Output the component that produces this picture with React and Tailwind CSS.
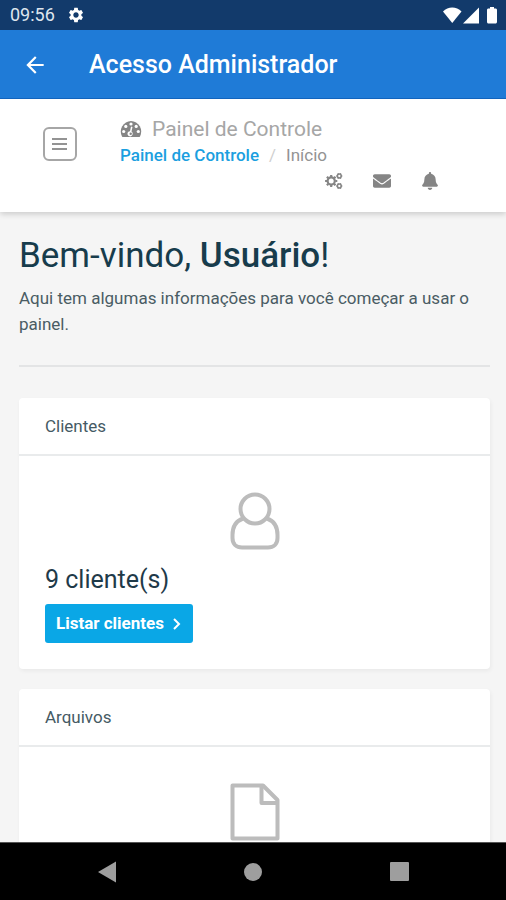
import React from "react";
import { FaEnvelope, FaBell } from "react-icons/fa";
import { MdSettings, MdArrowBack } from "react-icons/md";

const cards = [
  {
    title: "Clientes",
    icon: "user",
    total: "9 cliente(s)",
    action: "Listar clientes",
  },
  {
    title: "Arquivos",
    icon: "file",
  },
];

const GaugeIcon = () => (
  <svg viewBox="0 0 22 18" className="h-[18px] w-[22px]" aria-hidden="true">
    <path
      fill="currentColor"
      d="M11 1A10.5 10.5 0 0 0 2 16.4c.3.4.6.6 1.1.6h15.8c.5 0 .8-.2 1.1-.6A10.5 10.5 0 0 0 11 1z"
    />
    <g fill="#fff">
      <circle cx="3.7" cy="11.5" r="1.6" />
      <circle cx="5.8" cy="6.4" r="1.6" />
      <circle cx="11" cy="4" r="1.6" />
      <circle cx="16.2" cy="6.4" r="1.6" />
      <circle cx="18.3" cy="11.5" r="1.6" />
      <path d="M11 6.600l1.500.400-1 4.600a2.600 2.600 0 1 1-1.500-.4z" />
    </g>
    <circle cx="10.700" cy="13.800" r="1.200" fill="currentColor" />
  </svg>
);

// one big gear with two small ones, all hollow
const GearsIcon = () => (
  <svg
    viewBox="0 0 18 18"
    className="h-[18px] w-[18px]"
    fill="none"
    stroke="currentColor"
    aria-hidden="true"
  >
    <circle cx="6.2" cy="9" r="3.6" strokeWidth="2.2" />
    <path
      strokeWidth="2.2"
      d="M6.2 2.9v2M6.2 13.1v2M.1 9h2M10.3 9h2M1.9 4.7l1.4 1.4M9.1 11.9l1.4 1.4M10.5 4.7L9.1 6.1M3.3 11.9l-1.4 1.4"
    />
    <g strokeWidth="1.5">
      <circle cx="14.3" cy="4" r="1.9" />
      <circle cx="14.3" cy="14" r="1.9" />
      <path d="M11.3 4h1.2M16.1 4h1.2M12.8 1.4l.6 1M15.8 1.4l-.6 1M12.8 6.6l.6-1M15.8 6.6l-.6-1" />
      <path d="M11.3 14h1.2M16.1 14h1.2M12.8 11.4l.6 1M15.8 11.4l-.6 1M12.8 16.6l.6-1M15.8 16.6l-.6-1" />
    </g>
  </svg>
);

const CardIcon = ({ name }) => (
  <svg
    viewBox="0 0 50 58"
    className="h-[58px] w-[50px] text-[#bcbcbc]"
    fill="none"
    stroke="currentColor"
    strokeWidth="4"
    strokeLinejoin="round"
    aria-hidden="true"
  >
    {name === "user" ? (
      <>
        <circle cx="25" cy="17" r="14.5" />
        <path d="M13 26.5C6 29 2.500 35 2.500 43v3c0 6 4 9.500 9.500 9.500h26c5.500 0 9.500-3.500 9.500-9.500v-3c0-8-3.500-14-10.500-16.500" />
      </>
    ) : (
      <>
        <path d="M2.5 2.5H33L47.5 17v38.5h-45z" />
        <path d="M31.5 2.5V20h16" />
      </>
    )}
  </svg>
);

const StatusBar = () => (
  <div className="flex h-[30px] shrink-0 items-center justify-between bg-[#123a6b] pr-2 pl-2.5 text-white">
    <div className="flex items-center gap-3">
      <span className="text-[18px] leading-5 text-[#dfe6ee]">09:56</span>
      <MdSettings className="h-[18px] w-[18px]" />
    </div>
    <svg viewBox="0 0 55 18" className="h-[18px] w-[55px]" fill="currentColor">
      <path d="M0 5.500C5 .2 13.500.2 18.500 5.500L9.250 17z" />
      <path d="M20 17.500L36 1.500v16z" />
      <path d="M47 1h4v1.500h1.500c.8 0 1.500.6 1.500 1.400V16c0 .8-.7 1.500-1.500 1.500h-7c-.8 0-1.500-.7-1.500-1.500V3.900c0-.8.7-1.400 1.500-1.400H47z" />
    </svg>
  </div>
);

const PageHeader = () => (
  <header className="relative flex bg-white pt-[18px] pr-[67px] pb-[19px] pl-[43px] text-[#939393] shadow-[0_2px_6px_rgba(0,0,0,0.18)]">
    <button
      type="button"
      aria-label="Menu"
      className="mt-2.5 mr-[43px] flex h-[34px] w-[34px] shrink-0 items-center justify-center rounded-md border-2 border-[#a6a6a6]"
    >
      <svg viewBox="0 0 16 14" className="h-3.5 w-4" fill="currentColor">
        <path d="M0 1h15v2H0zM0 6h15v2H0zM0 11h15v2H0z" />
      </svg>
    </button>
    <div className="flex-1">
      <h1 className="flex items-center gap-2.5 text-[21px] leading-6 text-[#a6a6a6]">
        <span className="text-[#858585]">
          <GaugeIcon />
        </span>
        Painel de Controle
      </h1>
      <nav className="flex gap-2.5 text-[17px] leading-7">
        <a href="#painel" className="font-medium text-[#1b9fe0]">
          Painel de Controle
        </a>
        <span className="text-[#cfcfcf]">/</span>
        <span>Início</span>
      </nav>
      <div className="flex h-6 items-center justify-end gap-[30px] text-[#858585]">
        <button type="button" aria-label="Configurações">
          <GearsIcon />
        </button>
        <button type="button" aria-label="Mensagens">
          <FaEnvelope className="h-[18px] w-[18px]" />
        </button>
        <button type="button" aria-label="Notificações">
          <FaBell className="h-[18px] w-[18px]" />
        </button>
      </div>
    </div>
  </header>
);

const Card = ({ title, icon, total, action }) => (
  <section className="mb-5 rounded bg-white shadow-[1px_2px_4px_rgba(0,0,0,0.05)]">
    <h3 className="border-b-2 border-[#e9ebec] px-[26px] py-4 text-[17px] leading-6 text-[#455a64]">
      {title}
    </h3>
    <div className="px-[26px] pt-9 pb-[26px]">
      <div className="flex justify-center">
        <CardIcon name={icon} />
      </div>
      {total && (
        <p className="mt-3 text-[25px] leading-9 text-[#1f3a49]">{total}</p>
      )}
      {action && (
        <button
          type="button"
          className="mt-1.5 flex h-[39px] items-center gap-2 rounded-[3px] bg-[#0aa7e6] px-[11px] text-[17px] font-bold text-white"
        >
          {action}
          <svg
            viewBox="0 0 10 14"
            className="h-3.5 w-2.5"
            fill="none"
            stroke="currentColor"
            strokeWidth="2"
          >
            <path d="M2 2l5 5-5 5" />
          </svg>
        </button>
      )}
    </div>
  </section>
);

const App = () => {
  return (
    <div className="flex h-screen flex-col overflow-hidden bg-[#f5f5f5] font-[Roboto,sans-serif]">
      <StatusBar />
      <div className="flex h-[69px] shrink-0 items-center border-b border-[#1264bd] bg-[#1f7bd7] px-[22px] pt-0.5 text-white">
        <button type="button" aria-label="Voltar">
          <MdArrowBack className="h-[26px] w-[26px]" />
        </button>
        <span className="ml-[41px] text-[25px] leading-8 font-medium">
          Acesso Administrador
        </span>
      </div>

      <main className="min-h-0 flex-1 overflow-y-auto [scrollbar-width:none]">
        <PageHeader />
        <div className="px-[19px] pt-[22px] pr-4">
          <h2 className="text-[35px] leading-[44px] font-normal text-[#173c4c]">
            Bem-vindo, <strong className="font-medium">Usuário</strong>!
          </h2>
          <p className="mt-[7px] text-[17px] leading-[26px] text-[#4a5c64]">
            Aqui tem algumas informações para você começar a usar o painel.
          </p>
          <hr className="mt-7 mb-[31px] border-t-2 border-[#e3e4e5]" />
          {cards.map((card) => (
            <Card key={card.title} {...card} />
          ))}
        </div>
      </main>

      <nav className="flex h-[58px] shrink-0 items-center justify-around border-t border-[#555] bg-black px-[33px] text-[#9e9e9e]">
        <button type="button" aria-label="Anterior">
          <svg viewBox="0 0 20 22" className="h-[22px] w-5" fill="currentColor">
            <path d="M19 .5v21L1 11z" />
          </svg>
        </button>
        <button type="button" aria-label="Tela inicial">
          <span className="block h-[18px] w-[18px] rounded-full bg-[#9e9e9e]" />
        </button>
        <button type="button" aria-label="Recentes">
          <span className="block h-[19px] w-[19px] rounded-[1px] bg-[#9e9e9e]" />
        </button>
      </nav>
    </div>
  );
};

export default App;
